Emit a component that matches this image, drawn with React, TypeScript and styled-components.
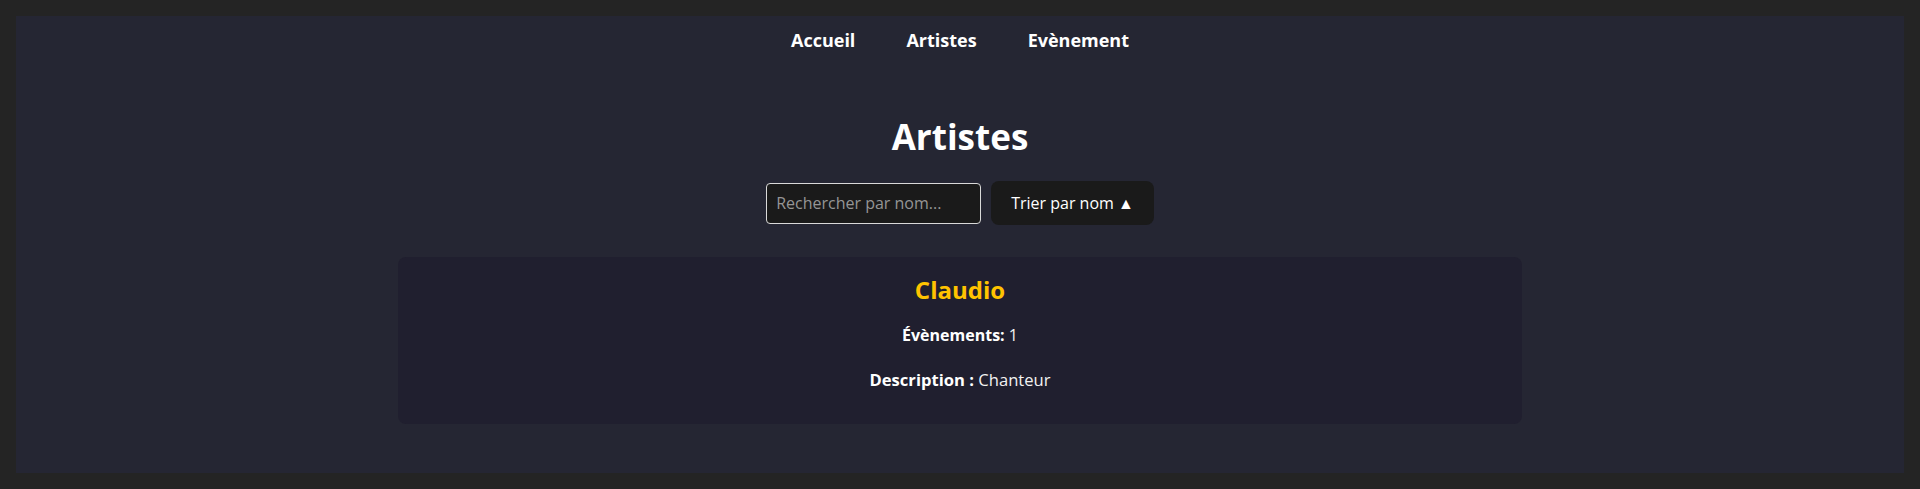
import React from "react";
import styled, { createGlobalStyle } from "styled-components";

const GlobalStyle = createGlobalStyle`
  html, body {
    margin: 0;
    padding: 0;
    background: #242424;
  }
  body {
    font-family: "Open Sans", "Noto Sans", sans-serif;
    color: rgba(255, 255, 255, 0.87);
  }
  * { box-sizing: border-box; }
`;

const Frame = styled.div`
  padding: 16px;
  background: #242424;
`;

const Panel = styled.div`
  background: #252633;
  min-height: 457px;
  display: flex;
  flex-direction: column;
  align-items: center;
`;

const Nav = styled.nav`
  display: flex;
  justify-content: center;
  gap: 51px;
  padding-top: 12px;
  height: 48px;
`;

const NavLink = styled.a`
  color: #ffffff;
  font-weight: 700;
  font-size: 18px;
  line-height: 25px;
  text-decoration: none;
`;

const Title = styled.h1`
  margin: 51px 0 0;
  font-size: 35px;
  line-height: 44px;
  font-weight: 700;
  color: #ffffff;
`;

const Controls = styled.div`
  display: flex;
  align-items: center;
  gap: 10px;
  margin-top: 22px;
`;

const SearchInput = styled.input`
  width: 215px;
  height: 41px;
  padding: 0 9px;
  background: #1a1a1a;
  border: 1px solid #d9d9d9;
  border-radius: 4px;
  color: #ffffff;
  font-family: inherit;
  font-size: 16px;
  outline: none;
  &::placeholder {
    color: #959595;
  }
`;

const SortButton = styled.button`
  height: 44px;
  padding: 0 19px;
  background: #1a1a1a;
  border: 1px solid transparent;
  border-radius: 8px;
  color: #ffffff;
  font-family: inherit;
  font-size: 16px;
  font-weight: 500;
  cursor: pointer;
`;

const Card = styled.section`
  width: 1124px;
  margin-top: 32px;
  padding: 18px 20px 32px;
  background: #201f2f;
  border-radius: 8px;
  text-align: center;
`;

const Name = styled.h3`
  margin: 0;
  font-size: 24px;
  line-height: 30px;
  font-weight: 700;
  color: #ffc300;
`;

const Info = styled.p<{ $size: number; $gap: number }>`
  margin: ${(p) => p.$gap}px 0 0;
  font-size: ${(p) => p.$size}px;
  line-height: 24px;
  color: #f2f2f2;
  strong {
    color: #ffffff;
    font-weight: 700;
  }
`;

export default function App() {
  return (
    <>
      <GlobalStyle />
      <Frame>
        <Panel>
          <Nav>
            <NavLink href="#">Accueil</NavLink>
            <NavLink href="#">Artistes</NavLink>
            <NavLink href="#">Evènement</NavLink>
          </Nav>
          <Title>Artistes</Title>
          <Controls>
            <SearchInput placeholder="Rechercher par nom..." />
            <SortButton>Trier par nom ▲</SortButton>
          </Controls>
          <Card>
            <Name>Claudio</Name>
            <Info $size={16} $gap={18}>
              <strong>Évènements:</strong> 1
            </Info>
            <Info $size={16.6} $gap={21}>
              <strong>Description :</strong> Chanteur
            </Info>
          </Card>
        </Panel>
      </Frame>
    </>
  );
}
